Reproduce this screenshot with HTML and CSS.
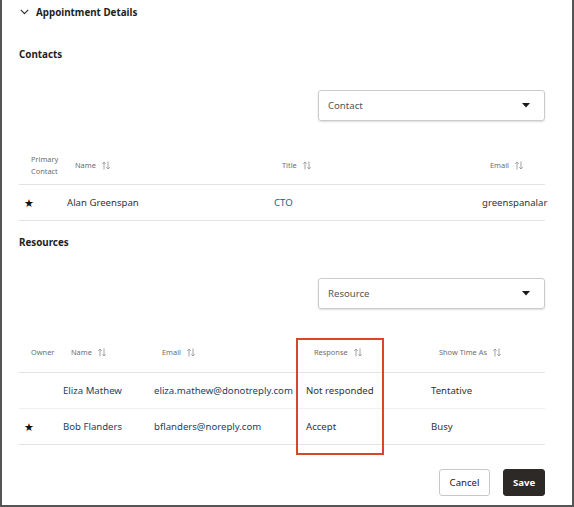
FILE: index.html
```html
<!DOCTYPE html>
<html>
<head>
<meta charset="utf-8">
<link rel="stylesheet" href="styles.css">
</head>
<body>
<div class="panel">
  <div class="titlebar">
    <svg class="chev" width="9" height="6" viewBox="0 0 9 6"><path d="M0.8 0.8 L4.5 4.6 L8.2 0.8" fill="none" stroke="#333" stroke-width="1.2"/></svg>
    <span class="title">Appointment Details</span>
  </div>

  <div class="heading h-contacts">Contacts</div>
  <div class="selrow">
    <div class="select"><span>Contact</span><svg width="8" height="5" viewBox="0 0 8 5"><path d="M0 0h8L4 4.5z" fill="#1a1a1a"/></svg></div>
  </div>

  <div class="tbl contacts">
    <div class="row head">
      <div class="c c1 hd two">Primary<br>Contact</div>
      <div class="c hd">Name <svg class="sort" width="8" height="9" viewBox="0 0 8 9"><path d="M2 8.5V1M0.3 2.8L2 1l1.7 1.8M6 0.5V8M4.3 6.2L6 8l1.7-1.8" fill="none" stroke="#9a9a9a" stroke-width="0.9"/></svg></div>
      <div class="c hd">Title <svg class="sort" width="8" height="9" viewBox="0 0 8 9"><path d="M2 8.5V1M0.3 2.8L2 1l1.7 1.8M6 0.5V8M4.3 6.2L6 8l1.7-1.8" fill="none" stroke="#9a9a9a" stroke-width="0.9"/></svg></div>
      <div class="c hd">Email <svg class="sort" width="8" height="9" viewBox="0 0 8 9"><path d="M2 8.5V1M0.3 2.8L2 1l1.7 1.8M6 0.5V8M4.3 6.2L6 8l1.7-1.8" fill="none" stroke="#9a9a9a" stroke-width="0.9"/></svg></div>
    </div>
    <div class="row data">
      <div class="c c1 star">★</div>
      <div class="c dk">Alan Greenspan</div>
      <div class="c blue">CTO</div>
      <div class="c dk last">greenspanalar</div>
    </div>
  </div>

  <div class="heading h-res">Resources</div>
  <div class="selrow">
    <div class="select"><span>Resource</span><svg width="8" height="5" viewBox="0 0 8 5"><path d="M0 0h8L4 4.5z" fill="#1a1a1a"/></svg></div>
  </div>

  <div class="tbl resources">
    <div class="row head">
      <div class="c c1 hd">Owner</div>
      <div class="c hd">Name <svg class="sort" width="8" height="9" viewBox="0 0 8 9"><path d="M2 8.5V1M0.3 2.8L2 1l1.7 1.8M6 0.5V8M4.3 6.2L6 8l1.7-1.8" fill="none" stroke="#9a9a9a" stroke-width="0.9"/></svg></div>
      <div class="c hd">Email <svg class="sort" width="8" height="9" viewBox="0 0 8 9"><path d="M2 8.5V1M0.3 2.8L2 1l1.7 1.8M6 0.5V8M4.3 6.2L6 8l1.7-1.8" fill="none" stroke="#9a9a9a" stroke-width="0.9"/></svg></div>
      <div class="c hd">Response <svg class="sort wide" width="8" height="9" viewBox="0 0 8 9"><path d="M2 8.5V1M0.3 2.8L2 1l1.7 1.8M6 0.5V8M4.3 6.2L6 8l1.7-1.8" fill="none" stroke="#9a9a9a" stroke-width="0.9"/></svg></div>
      <div class="c hd">Show Time As <svg class="sort wide" width="8" height="9" viewBox="0 0 8 9"><path d="M2 8.5V1M0.3 2.8L2 1l1.7 1.8M6 0.5V8M4.3 6.2L6 8l1.7-1.8" fill="none" stroke="#9a9a9a" stroke-width="0.9"/></svg></div>
    </div>
    <div class="row data light">
      <div class="c c1"></div>
      <div class="c navy">Eliza Mathew</div>
      <div class="c navy">eliza.mathew@donotreply.com</div>
      <div class="c dk">Not responded</div>
      <div class="c dk">Tentative</div>
    </div>
    <div class="row data">
      <div class="c c1 star">★</div>
      <div class="c navy">Bob Flanders</div>
      <div class="c navy">bflanders@noreply.com</div>
      <div class="c dk">Accept</div>
      <div class="c dk">Busy</div>
    </div>
  </div>

  <div class="actions">
    <button class="btn cancel">Cancel</button>
    <button class="btn save">Save</button>
  </div>

  <div class="highlight"></div>
</div>
</body>
</html>
```

FILE: styles.css
```css
* { box-sizing: border-box; }
html, body { margin: 0; padding: 0; background: #fff; }
body { font-family: "Noto Sans", "Open Sans", sans-serif; color: #222; }

.panel {
  position: relative;
  width: 574px;
  height: 507px;
  border: 2px solid #555;
  border-top: none;
  padding: 0 27px 0 17px;
  overflow: hidden;
}

.titlebar {
  height: 24px;
  display: flex;
  align-items: center;
  padding-left: 1px;
}
.chev { margin-right: 7px; }
.title { font-size: 9.8px; font-weight: 700; color: #1e1e1e; }

.heading {
  font-size: 9.8px;
  font-weight: 700;
  line-height: 16px;
  color: #1e1e1e;
}
.h-contacts { margin-top: 23px; }
.h-res { margin-top: 14px; }

.selrow { display: flex; justify-content: flex-end; margin-top: 27px; }
.select {
  width: 227px;
  height: 31px;
  border: 1px solid #cbcbcb;
  border-radius: 3px;
  box-shadow: 0 1px 2px rgba(0,0,0,0.14);
  display: flex;
  align-items: center;
  justify-content: space-between;
  padding: 0 14px 0 9px;
  font-size: 9.6px;
  color: #555;
}

.tbl { margin-top: 25px; }
.resources { margin-top: 23px; }
.row { display: grid; align-items: center; border-bottom: 1px solid #e3e3e3; }
.contacts .row { grid-template-columns: 40px 207px 208px 71px; }
.resources .row { grid-template-columns: 36px 91px 152px 125px 122px; }
.row.head { height: 39px; }
.resources .row.head { height: 41px; }
.row.data { height: 36px; }
.row.light { border-bottom-color: #f0f0f0; }

.c { padding-left: 8px; font-size: 9.6px; white-space: nowrap; overflow: hidden; }
.c.last { overflow: visible; }
.c.hd { padding-left: 16px; font-size: 7.4px; color: #6e6e6e; display: flex; align-items: center; overflow: visible; }
.c1.hd { padding-left: 12px; }
.two { line-height: 12px; display: block !important; }
.sort { margin-left: 6px; }
.sort.wide { margin-left: 6px; }
.c1.star { padding-left: 5px; font-size: 11px; color: #111; }
.dk { color: #333; }
.blue { color: #1d5b8e; }
.navy { color: #243f5e; }

.actions {
  display: flex;
  justify-content: flex-end;
  gap: 13px;
  margin-top: 24px;
}
.btn {
  height: 27px;
  border-radius: 3px;
  font-family: inherit;
  font-size: 9.6px;
  padding: 0;
  cursor: pointer;
}
.cancel { width: 51px; background: #fff; border: 1px solid #c8c8c8; color: #222; }
.save { width: 42px; background: #2d2926; border: 1px solid #2d2926; color: #fff; font-weight: 700; }

.highlight {
  position: absolute;
  left: 294px;
  top: 338px;
  width: 88px;
  height: 117px;
  border: 2px solid #d8462c;
}
```
